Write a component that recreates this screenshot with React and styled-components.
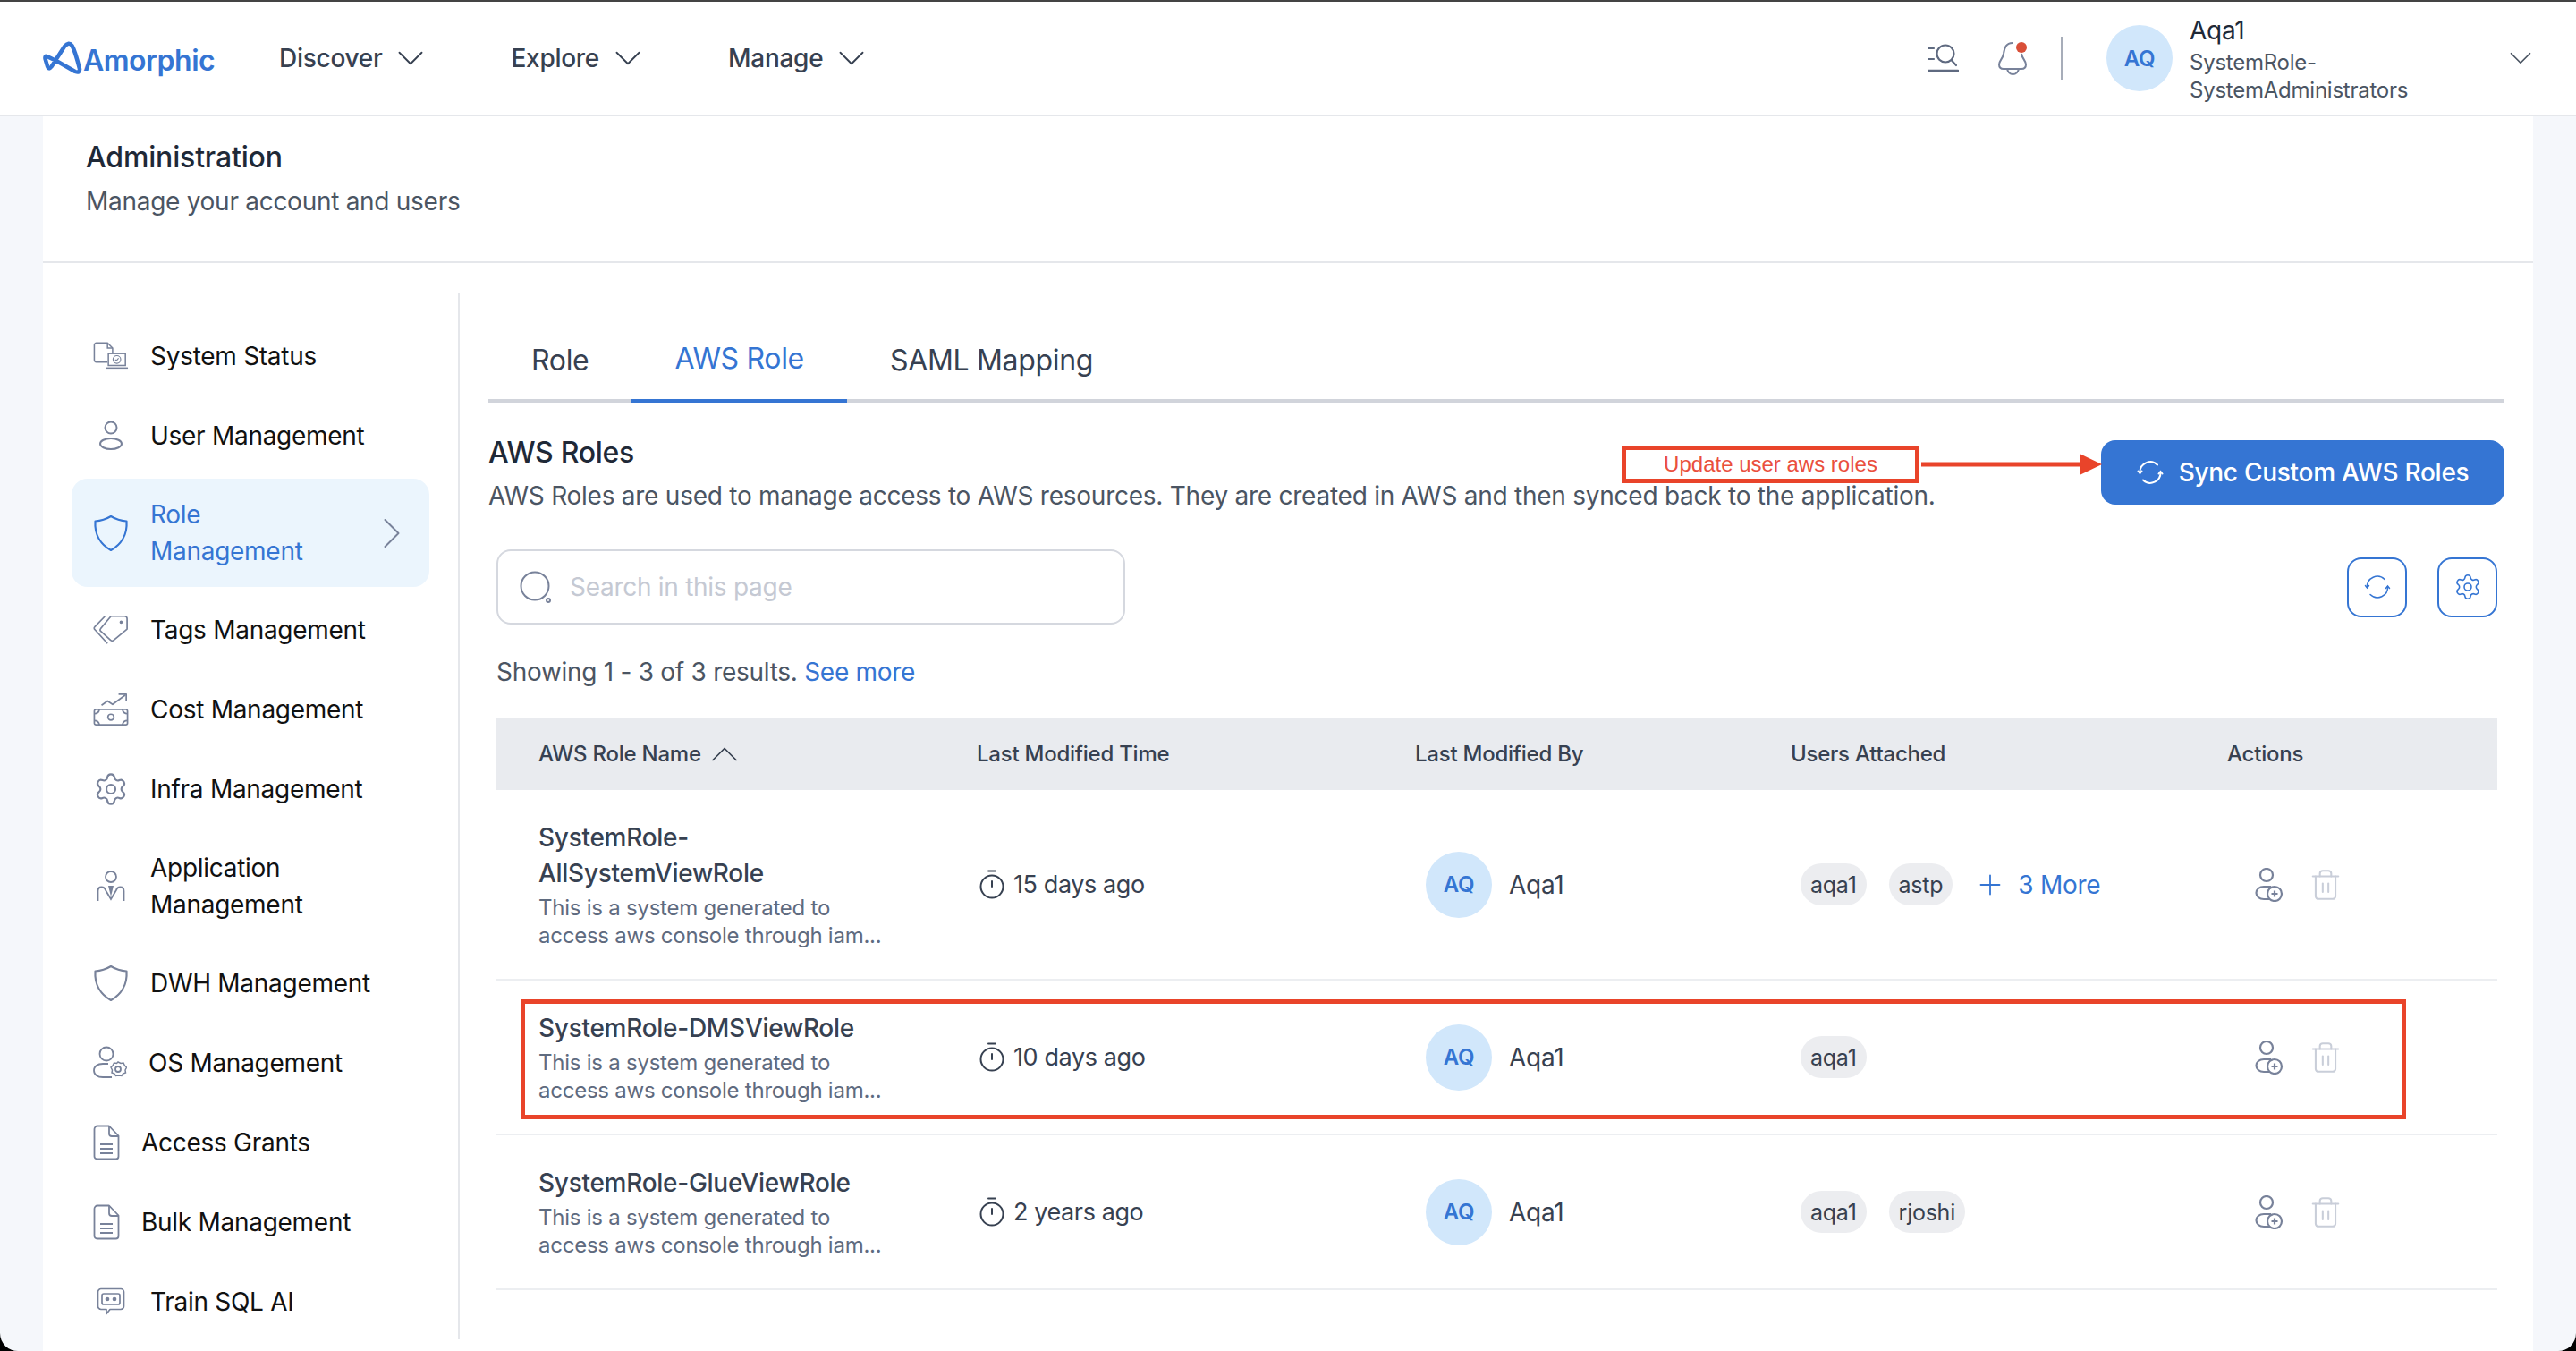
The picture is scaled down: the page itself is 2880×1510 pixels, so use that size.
import React from 'react';
import styled, { createGlobalStyle } from 'styled-components';
import { ChevronDown, ChevronRight, ChevronUp, Plus, Settings, Trash2 } from 'lucide-react';

const GlobalStyle = createGlobalStyle`
  html, body {
    margin: 0;
    background: #000;
  }
  body {
    font-family: Inter, "Liberation Sans", sans-serif;
  }
  * {
    box-sizing: border-box;
    letter-spacing: -0.01em;
  }
`;

const ICON = '#78829a';
const BLUE = '#3575d3';

const sideItems = [
  { label: 'System Status', icon: <StatusIcon /> },
  { label: 'User Management', icon: <UserIcon /> },
  { label: ['Role', 'Management'], icon: <ShieldIcon color={BLUE} />, active: true },
  { label: 'Tags Management', icon: <TagsIcon /> },
  { label: 'Cost Management', icon: <CostIcon /> },
  { label: 'Infra Management', icon: <Settings size={40} strokeWidth={1.3} color={ICON} /> },
  { label: ['Application', 'Management'], icon: <ManagerIcon /> },
  { label: 'DWH Management', icon: <ShieldIcon color={ICON} /> },
  { label: 'OS Management', icon: <UserGearIcon />, width: 38 },
  { label: 'Access Grants', icon: <DocIcon />, width: 30 },
  { label: 'Bulk Management', icon: <DocIcon />, width: 30 },
  { label: 'Train SQL AI', icon: <BotIcon /> },
];

const roles = [
  { name: 'SystemRole-AllSystemViewRole', time: '15 days ago', users: ['aqa1', 'astp'], more: '3 More', tall: true },
  { name: 'SystemRole-DMSViewRole', time: '10 days ago', users: ['aqa1'] },
  { name: 'SystemRole-GlueViewRole', time: '2 years ago', users: ['aqa1', 'rjoshi'] },
];

function StatusIcon() {
  return (
    <svg width="42" height="34" viewBox="0 0 42 34" fill="none" stroke={ICON} strokeWidth="1.6">
      <path d="M17 24H4a2.5 2.5 0 0 1-2.5-2.500V4A2.500 2.500 0 0 1 4 1.500h13l6 6v6" />
      <path d="M17 1.500v6h6" />
      <rect x="18" y="14" width="20" height="14" />
      <path d="M15 31h26" />
      <circle cx="28" cy="21" r="4.500" strokeWidth="1.200" />
      <path d="M26 21l1.500 1.500 2.500-3" strokeWidth="1.200" />
    </svg>
  );
}

function UserIcon() {
  return (
    <svg width="28" height="34" viewBox="0 0 28 34" fill="none" stroke={ICON} strokeWidth="2">
      <circle cx="14" cy="8" r="6.500" />
      <ellipse cx="14" cy="26" rx="12" ry="6" />
    </svg>
  );
}

function ShieldIcon({ color }) {
  return (
    <svg width="40" height="42" viewBox="0 0 40 42" fill="none" stroke={color} strokeWidth="2.200" strokeLinejoin="round">
      <path d="M20 2c5 3 11 5 17.500 5.500C38.500 23 31 34 20 40 9 34 1.500 23 2.500 7.500 9 7 15 5 20 2z" />
    </svg>
  );
}

function TagsIcon() {
  return (
    <svg width="42" height="36" viewBox="0 0 42 36" fill="none" stroke={ICON} strokeWidth="1.800" strokeLinejoin="round">
      <path d="M21 2h16a3 3 0 0 1 3 3v12L24.500 30a3 3 0 0 1-4 0L9 19.500a2 2 0 0 1 0-3z" />
      <path d="M14 2 2 14.500a2 2 0 0 0 0 3L17 34" />
      <circle cx="33" cy="9" r="1" fill={ICON} />
    </svg>
  );
}

function CostIcon() {
  return (
    <svg width="42" height="40" viewBox="0 0 42 40" fill="none" stroke={ICON} strokeWidth="1.800" strokeLinejoin="round">
      <path d="M10 15l7-5 6 4L38 3" />
      <path d="M30 2h9v8" />
      <rect x="1.500" y="20" width="39" height="18" rx="2" />
      <circle cx="21" cy="29" r="3.500" />
      <path d="M1.500 25q5 0 6-5M40.500 25q-5 0-6-5M1.500 33q5 0 6 5M40.500 33q-5 0-6 5" />
    </svg>
  );
}

function ManagerIcon() {
  return (
    <svg width="32" height="36" viewBox="0 0 32 36" fill="none" stroke={ICON} strokeWidth="1.800">
      <circle cx="16" cy="7" r="6" />
      <path d="M1.500 34V23q0-4.500 4-4.500 3.500 0 4.500 3.500l6 10 6-10q1-3.500 4.500-3.500 4 0 4 4.500v11" />
      <path d="M13 17h6l-3 12z" fill={ICON} stroke="none" />
    </svg>
  );
}

function UserGearIcon() {
  return (
    <svg width="38" height="38" viewBox="0 0 38 38" fill="none" stroke={ICON} strokeWidth="1.800">
      <circle cx="15" cy="9" r="7.500" />
      <path d="M21 35H11C5 35 1 32 1 27.500S5 20 11 20h6" />
      <path d="M28 18l3 1.500 3-.500 1.500 3 2 2-1.500 3 .5 3-3 1-1.500 2.500-3.500-.500-3 .500-1.500-2.500-3-1 .500-3-1.500-3 2-2 1.500-3 3 .500z" strokeWidth="1.500" />
      <circle cx="28" cy="26" r="3" />
    </svg>
  );
}

function DocIcon() {
  return (
    <svg width="30" height="40" viewBox="0 0 30 40" fill="none" stroke={ICON} strokeWidth="1.800" strokeLinejoin="round">
      <path d="M5 1.500h13l10.500 11v23a3 3 0 0 1-3 3H4.500a3 3 0 0 1-3-3V5A3.500 3.500 0 0 1 5 1.500z" />
      <path d="M18 1.500V10a3 3 0 0 0 3 3h7.500" />
      <path d="M8 22h14M8 27h14M8 32h14" />
    </svg>
  );
}

function BotIcon() {
  return (
    <svg width="32" height="32" viewBox="0 0 32 32" fill="none" stroke={ICON} strokeWidth="1.700" strokeLinejoin="round">
      <path d="M5 1.500h22a3.500 3.500 0 0 1 3.500 3.500v16a3.500 3.500 0 0 1-3.500 3.500H15l-4 5v-5H5A3.500 3.500 0 0 1 1.500 21V5A3.500 3.500 0 0 1 5 1.500z" />
      <rect x="6" y="7" width="20" height="12" rx="2" />
      <circle cx="12" cy="13" r="1.500" fill={ICON} />
      <circle cx="20" cy="13" r="1.500" fill={ICON} />
    </svg>
  );
}

function Logo() {
  return (
    <svg width="46" height="40" viewBox="0 0 46 40" fill="none" stroke={BLUE} strokeWidth="4.500" strokeLinecap="round" strokeLinejoin="round">
      <path d="M15 23 4.500 18Q2 17 2.500 20.500L5 29q1.500 4.500 4.500.500L24 7q5-6 8.500-1 3.500 6 8.500 26 .500 5-5 3z" />
    </svg>
  );
}

function ListSearchIcon() {
  return (
    <svg width="35" height="34" viewBox="0 0 35 34" fill="none" stroke="#5f6a80" strokeWidth="2.200" strokeLinecap="round">
      <path d="M1 6h6M1 18h6" />
      <circle cx="20" cy="12" r="9.500" />
      <path d="M27 19.500 32 25" />
      <path d="M1 31h33" strokeWidth="2.600" />
    </svg>
  );
}

function BellIcon() {
  return (
    <svg width="36" height="38" viewBox="0 0 36 38" fill="none" stroke="#78829a" strokeWidth="2" strokeLinejoin="round">
      <path d="M17 2C10 2 8 7 7 14 6 20 2 22 2 26c0 3 2 5 5 5h20c3 0 5-2 5-5 0-4-4-6-5-12" />
      <path d="M11 31c1 4 4 6 6.500 6S23 35 24 31" />
      <circle cx="27" cy="7" r="6" fill="#d94f38" stroke="none" />
    </svg>
  );
}

function SyncIcon({ color = '#fff', width = 2 }) {
  return (
    <svg width="30" height="30" viewBox="0 0 30 30" fill="none" stroke={color} strokeWidth={width} strokeLinecap="round">
      <path d="M3.500 15.500A11.500 11.500 0 0 1 23 6.500" />
      <path d="M26.500 14.500A11.500 11.500 0 0 1 7 23.500" />
      <path d="M1.500 13.500 3.500 16l2-2.500" />
      <path d="M24.500 16.500l2-2.500 2 2.500" />
    </svg>
  );
}

function SearchIcon() {
  return (
    <svg width="36" height="36" viewBox="0 0 36 36" fill="none" stroke="#78829a" strokeWidth="2">
      <circle cx="17" cy="17" r="15.500" />
      <circle cx="32" cy="33" r="2" />
    </svg>
  );
}

function TimerIcon() {
  return (
    <svg width="28" height="33" viewBox="0 0 28 33" fill="none" stroke="#374151" strokeWidth="2" strokeLinecap="round">
      <path d="M10 1.500h8" />
      <circle cx="14" cy="19" r="12.500" />
      <path d="M14 13v6" />
    </svg>
  );
}

function UserAddIcon() {
  return (
    <svg width="32" height="38" viewBox="0 0 32 38" fill="none" stroke={ICON} strokeWidth="2.200">
      <circle cx="13" cy="8" r="7" />
      <path d="M16 35H10C5 35 1.500 32 1.500 28S5 21 10 21h8" />
      <circle cx="22" cy="29" r="8" />
      <path d="M22 25.500v7M18.500 29h7" />
    </svg>
  );
}

function AnnotationArrow() {
  return (
    <svg width="202" height="26" viewBox="0 0 202 26">
      <path d="M0 10.500h178v5H0z" fill="#e9442a" />
      <path d="M177 1l25 12-25 12z" fill="#e9442a" />
    </svg>
  );
}

function SideMenuItem({ item }) {
  const lines = Array.isArray(item.label) ? item.label : [item.label];
  return (
    <SideItem $active={item.active} $double={lines.length > 1}>
      <SideIcon $width={item.width}>{item.icon}</SideIcon>
      <SideLabel $active={item.active}>
        {lines.map((line) => (
          <span key={line}>{line}</span>
        ))}
      </SideLabel>
      {item.active && (
        <SideChevron>
          <ChevronRight size={60} strokeWidth={0.8} color={ICON} />
        </SideChevron>
      )}
    </SideItem>
  );
}

function RoleRow({ role }) {
  return (
    <Row $tall={role.tall}>
      <NameCell>
        <RoleName>{role.name}</RoleName>
        <RoleDesc>This is a system generated to access aws console through iam...</RoleDesc>
      </NameCell>
      <TimeCell>
        <TimerIcon />
        {role.time}
      </TimeCell>
      <ModifiedCell>
        <Avatar>AQ</Avatar>
        Aqa1
      </ModifiedCell>
      <UsersCell>
        {role.users.map((user) => (
          <Chip key={user}>{user}</Chip>
        ))}
        {role.more && (
          <MoreLink>
            <Plus size={36} strokeWidth={1.200} />
            {role.more}
          </MoreLink>
        )}
      </UsersCell>
      <ActionsCell>
        <UserAddIcon />
        <Trash2 size={38} strokeWidth={1.300} color="#c9ced9" />
      </ActionsCell>
    </Row>
  );
}

export default function App() {
  return (
    <>
      <GlobalStyle />
      <Frame>
        <Header>
          <Brand>
            <Logo />
            <BrandName>Amorphic</BrandName>
          </Brand>
          <Nav>
            {['Discover', 'Explore', 'Manage'].map((name) => (
              <NavItem key={name}>
                {name}
                <ChevronDown size={50} strokeWidth={0.9} color="#374151" />
              </NavItem>
            ))}
          </Nav>
          <HeaderRight>
            <ListSearchIcon />
            <BellIcon />
            <Divider />
            <Avatar>AQ</Avatar>
            <Account>
              <AccountName>Aqa1</AccountName>
              <AccountRole>SystemRole-<br />SystemAdministrators</AccountRole>
            </Account>
            <ChevronDown size={42} strokeWidth={1} color="#4b5563" />
          </HeaderRight>
        </Header>

        <Page>
          <PageTitle>
            <h1>Administration</h1>
            <p>Manage your account and users</p>
          </PageTitle>

          <Columns>
            <Sidebar>
              {sideItems.map((item) => (
                <SideMenuItem key={String(item.label)} item={item} />
              ))}
            </Sidebar>

            <Content>
              <Tabs>
                <Tab>Role</Tab>
                <Tab $active>AWS Role</Tab>
                <Tab>SAML Mapping</Tab>
              </Tabs>

              <SectionHead>
                <div>
                  <SectionTitle>AWS Roles</SectionTitle>
                  <SectionText>
                    AWS Roles are used to manage access to AWS resources. They are created in AWS and then synced back to the application.
                  </SectionText>
                </div>
                <SyncButton>
                  <SyncIcon />
                  Sync Custom AWS Roles
                </SyncButton>
              </SectionHead>

              <Toolbar>
                <SearchBox>
                  <SearchIcon />
                  <SearchInput placeholder="Search in this page" />
                </SearchBox>
                <ToolButtons>
                  <IconButton><SyncIcon color={BLUE} width={1.500} /></IconButton>
                  <IconButton><Settings size={32} strokeWidth={1.200} color={BLUE} /></IconButton>
                </ToolButtons>
              </Toolbar>

              <Results>
                Showing 1 - 3 of 3 results. <SeeMore>See more</SeeMore>
              </Results>

              <Table>
                <HeadRow>
                  <HeadCell>
                    AWS Role Name
                    <ChevronUp size={52} strokeWidth={0.8} color="#374151" />
                  </HeadCell>
                  <HeadCell>Last Modified Time</HeadCell>
                  <HeadCell>Last Modified By</HeadCell>
                  <HeadCell>Users Attached</HeadCell>
                  <HeadCell>Actions</HeadCell>
                </HeadRow>
                {roles.map((role) => (
                  <RoleRow key={role.name} role={role} />
                ))}
              </Table>
            </Content>
          </Columns>

          <NoteBox>Update user aws roles</NoteBox>
          <NoteArrow><AnnotationArrow /></NoteArrow>
          <RowHighlight />
        </Page>
      </Frame>
    </>
  );
}

const Frame = styled.div`
  height: 1510px;
  display: flex;
  flex-direction: column;
  overflow: hidden;
  background: #f5f7fb;
  border-top: 2px solid #444;
  border-radius: 0 0 20px 20px;
`;

const Header = styled.header`
  flex: none;
  height: 128px;
  display: flex;
  align-items: center;
  padding: 0 41px 0 48px;
  background: #fff;
  border-bottom: 2px solid #e5e7eb;
`;

const Brand = styled.div`
  width: 264px;
  display: flex;
  align-items: center;
`;

const BrandName = styled.span`
  margin: 5px 0 0 -1px;
  font-size: 32px;
  font-weight: 600;
  letter-spacing: -0.5px;
  color: ${BLUE};
`;

const Nav = styled.nav`
  display: flex;
  gap: 87px;
`;

const NavItem = styled.div`
  display: flex;
  align-items: center;
  gap: 7px;
  font-size: 28px;
  font-weight: 500;
  color: #374151;
`;

const HeaderRight = styled.div`
  margin-left: auto;
  display: flex;
  align-items: center;
  gap: 43px;
`;

const Divider = styled.div`
  width: 2px;
  height: 48px;
  margin: 0 6px 0 -8px;
  background: #a7adb9;
`;

const Avatar = styled.div`
  flex: none;
  width: 74px;
  height: 74px;
  border-radius: 50%;
  display: flex;
  align-items: center;
  justify-content: center;
  background: #d1e7fb;
  color: ${BLUE};
  font-size: 24px;
  font-weight: 600;
`;

const Account = styled.div`
  width: 306px;
  margin-left: -24px;
`;

const AccountName = styled.div`
  font-size: 28px;
  line-height: 40px;
  color: #1f2937;
`;

const AccountRole = styled.div`
  font-size: 24px;
  line-height: 31px;
  color: #4b5563;
`;

const Page = styled.main`
  position: relative;
  flex: 1;
  margin: 0 48px;
  background: #fff;
`;

const PageTitle = styled.div`
  height: 164px;
  padding: 24px 0 0 48px;
  border-bottom: 2px solid #e5e7eb;

  h1 {
    margin: 0 0 7px;
    font-size: 32px;
    line-height: 44px;
    font-weight: 500;
    letter-spacing: -0.005em;
    color: #1f2937;
  }

  p {
    margin: 0;
    font-size: 28px;
    line-height: 40px;
    color: #4b5563;
  }
`;

const Columns = styled.div`
  display: flex;
  margin-top: 33px;
`;

const Sidebar = styled.aside`
  flex: none;
  width: 466px;
  display: flex;
  flex-direction: column;
  gap: 5px;
  padding: 29px 32px 0;
  border-right: 2px solid #e5e7eb;
`;

const SideItem = styled.div`
  display: flex;
  align-items: center;
  gap: 24px;
  width: 400px;
  height: ${(p) => (p.$double ? 121 : 84)}px;
  margin: ${(p) => (p.$double ? '1px 0' : '0')};
  padding: 0 24px;
  border-radius: 18px;
  background: ${(p) => (p.$active ? '#ebf5fd' : 'transparent')};
`;

const SideIcon = styled.div`
  flex: none;
  width: ${(p) => p.$width || 40}px;
  display: flex;
  justify-content: center;
`;

const SideLabel = styled.div`
  flex: 1;
  display: flex;
  flex-direction: column;
  font-size: 28px;
  line-height: 41px;
  color: ${(p) => (p.$active ? BLUE : '#111')};
`;

const SideChevron = styled.div`
  display: flex;
  margin-right: -12px;
`;

const Content = styled.section`
  flex: 1;
  min-width: 0;
  padding: 0 32px;
`;

const Tabs = styled.div`
  height: 123px;
  display: flex;
  align-items: flex-end;
  border-bottom: 4px solid #d1d4db;
`;

const Tab = styled.div`
  margin-bottom: -4px;
  padding: 0 48px ${(p) => (p.$active ? 23 : 21)}px;
  border-bottom: 4px solid ${(p) => (p.$active ? BLUE : 'transparent')};
  font-size: 32px;
  line-height: 44px;
  color: ${(p) => (p.$active ? BLUE : '#374151')};
`;

const SectionHead = styled.div`
  display: flex;
  justify-content: space-between;
  align-items: flex-start;
  margin-top: 36px;
`;

const SectionTitle = styled.h2`
  margin: 0 0 8px;
  font-size: 32px;
  line-height: 40px;
  font-weight: 500;
  color: #1f2937;
`;

const SectionText = styled.p`
  margin: 0;
  font-size: 28px;
  line-height: 40px;
  letter-spacing: -0.25px;
  color: #4b5563;
`;

const SyncButton = styled.button`
  flex: none;
  width: 451px;
  height: 72px;
  margin-top: 6px;
  display: flex;
  align-items: center;
  justify-content: center;
  gap: 17px;
  border: 0;
  border-radius: 16px;
  background: ${BLUE};
  color: #fff;
  font: 500 28px Inter, sans-serif;
`;

const Toolbar = styled.div`
  display: flex;
  justify-content: space-between;
  align-items: center;
  margin-top: 40px;
  padding: 0 8px 0 9px;
`;

const SearchBox = styled.div`
  width: 703px;
  height: 84px;
  display: flex;
  align-items: center;
  gap: 20px;
  padding: 0 24px;
  border: 2px solid #d5d8df;
  border-radius: 16px;
`;

const SearchInput = styled.input`
  flex: 1;
  border: 0;
  outline: 0;
  padding: 0;
  font: 28px Inter, sans-serif;

  &::placeholder {
    color: #c5c9d3;
    opacity: 1;
  }
`;

const ToolButtons = styled.div`
  display: flex;
  gap: 34px;
`;

const IconButton = styled.button`
  width: 67px;
  height: 67px;
  display: flex;
  align-items: center;
  justify-content: center;
  padding: 0;
  background: #fff;
  border: 2px solid ${BLUE};
  border-radius: 16px;
`;

const Results = styled.div`
  margin-top: 33px;
  padding-left: 9px;
  font-size: 28px;
  line-height: 40px;
  color: #4b5563;
`;

const SeeMore = styled.span`
  color: ${BLUE};
`;

const Table = styled.div`
  margin: 31px 8px 0 9px;
`;

const HeadRow = styled.div`
  display: grid;
  grid-template-columns: 490px 490px 420px 488px 1fr;
  height: 81px;
  background: #e9ebef;
`;

const HeadCell = styled.div`
  display: flex;
  align-items: center;
  padding-left: 47px;
  font-size: 24px;
  font-weight: 500;
  color: #374151;
`;

const Row = styled.div`
  display: grid;
  grid-template-columns: 490px 490px 420px 488px 1fr;
  height: ${(p) => (p.$tall ? 213 : 173)}px;
  align-items: center;
  border-bottom: 2px solid #eceef1;
`;

const NameCell = styled.div`
  padding-left: 47px;
`;

const RoleName = styled.div`
  max-width: 380px;
  font-size: 28px;
  line-height: 40px;
  font-weight: 500;
  color: #374151;
`;

const RoleDesc = styled.div`
  max-width: 395px;
  margin-top: 3px;
  font-size: 24px;
  line-height: 31.500px;
  color: #5f6b7f;
`;

const TimeCell = styled.div`
  display: flex;
  align-items: center;
  gap: 10px;
  padding-left: 50px;
  font-size: 27px;
  letter-spacing: -0.4px;
  color: #374151;
`;

const ModifiedCell = styled.div`
  display: flex;
  align-items: center;
  gap: 19px;
  padding-left: 59px;
  font-size: 28px;
  color: #374151;
`;

const UsersCell = styled.div`
  display: flex;
  align-items: center;
  gap: 25px;
  padding-left: 58px;
`;

const Chip = styled.span`
  height: 47px;
  padding: 0 11px;
  display: flex;
  align-items: center;
  border-radius: 24px;
  background: #ecedf0;
  font-size: 25px;
  color: #374151;
`;

const MoreLink = styled.span`
  display: flex;
  align-items: center;
  gap: 13px;
  margin-left: -1px;
  color: ${BLUE};
  font-size: 28px;
`;

const ActionsCell = styled.div`
  display: flex;
  align-items: center;
  gap: 28px;
  padding-left: 78px;
`;

const NoteBox = styled.div`
  position: absolute;
  left: 1765px;
  top: 368px;
  width: 333px;
  height: 42px;
  display: flex;
  align-items: center;
  justify-content: center;
  border: 5px solid #e9442a;
  background: #fff;
  color: #ea4f3d;
  font: 24px "Liberation Sans", sans-serif;
  letter-spacing: 0;
`;

const NoteArrow = styled.div`
  position: absolute;
  left: 2100px;
  top: 376px;
  display: flex;
`;

const RowHighlight = styled.div`
  position: absolute;
  left: 534px;
  top: 987px;
  width: 2108px;
  height: 134px;
  border: 5px solid #e9442a;
`;
